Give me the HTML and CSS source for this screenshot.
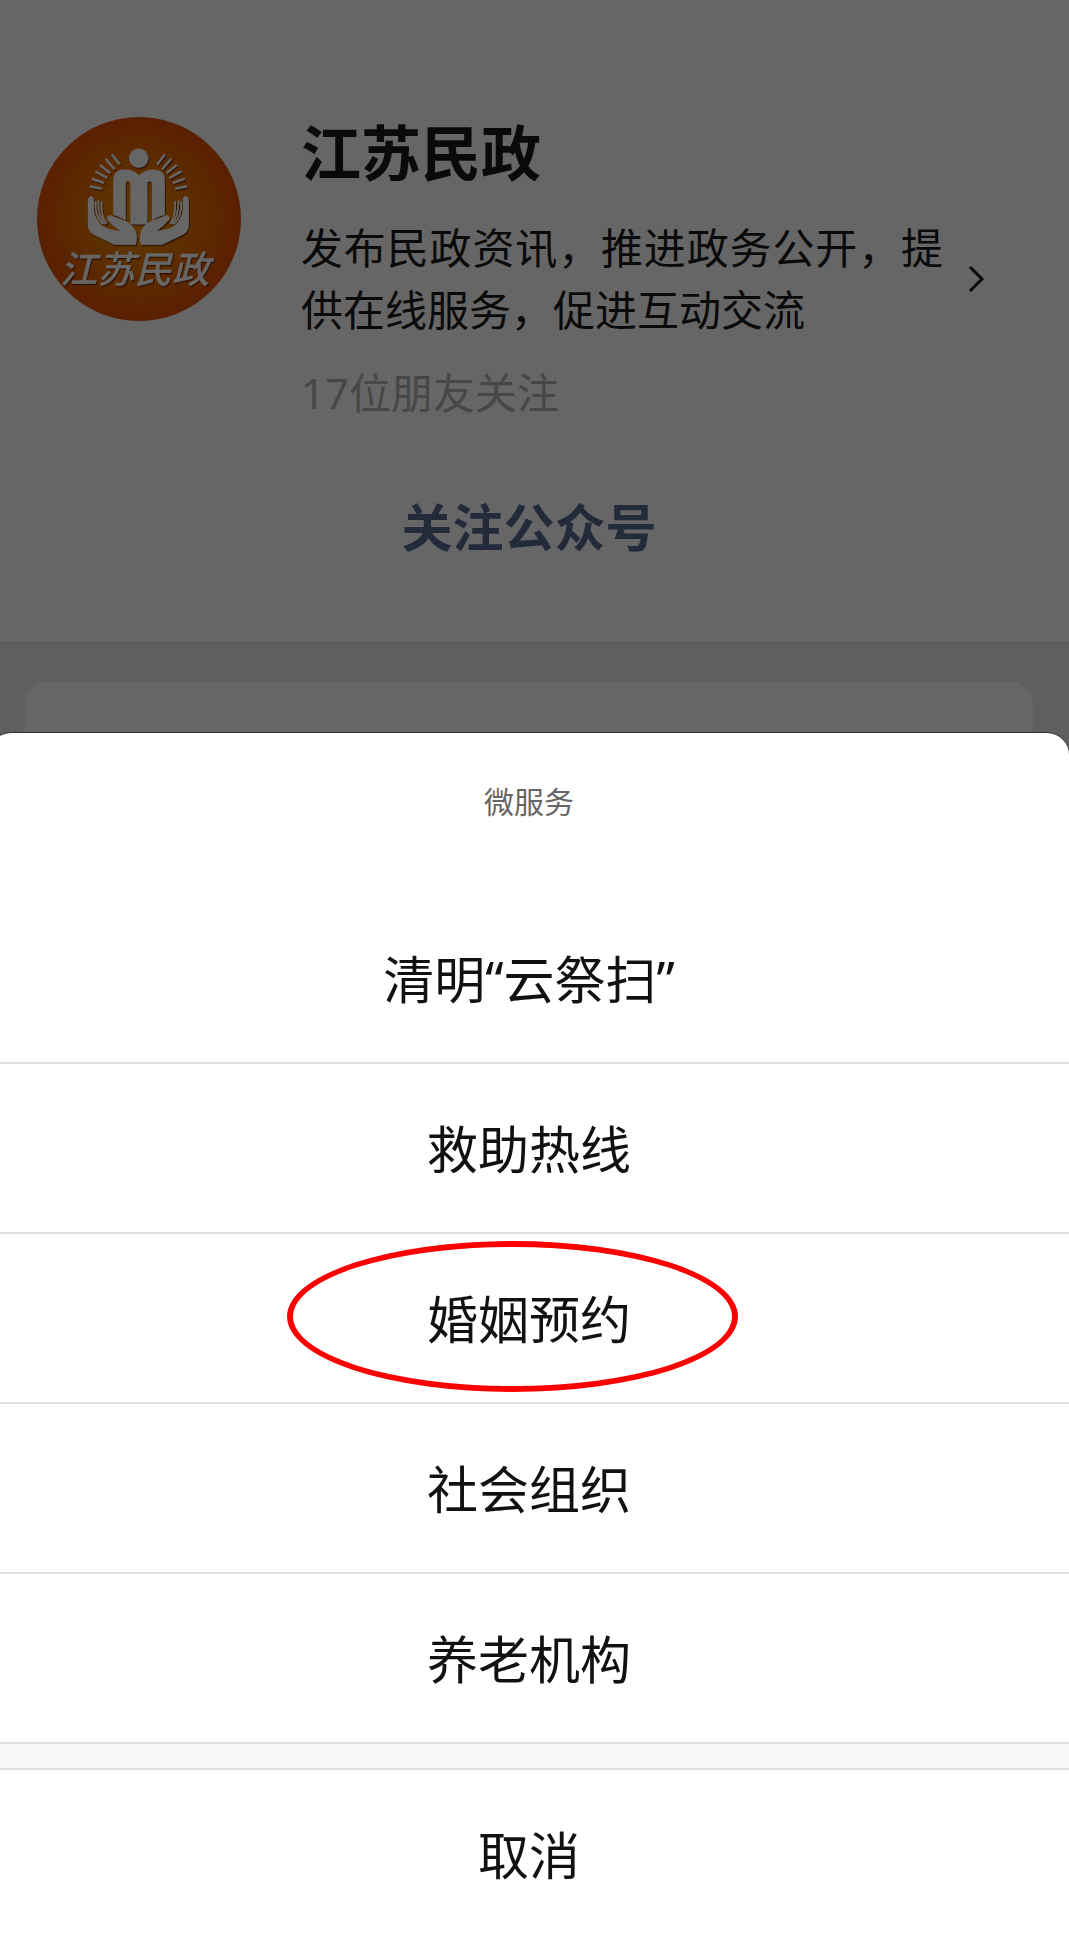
FILE: index.html
```
<!DOCTYPE html>
<html lang="zh-CN">
<head>
<meta charset="UTF-8">
<meta name="viewport" content="width=device-width, initial-scale=1.0">
<title>江苏民政</title>
<link rel="stylesheet" href="styles.css">
</head>
<body>
    <div class="screen">
        <main class="page">
            <section class="profile">
                <a class="account" href="#">
                    <svg class="logo" viewBox="52 52 610 610" role="img" aria-label="江苏民政">
                        <defs>
                            <radialGradient id="orange">
                                <stop offset="0" stop-color="#ee9400"/>
                                <stop offset="0.5" stop-color="#e87200"/>
                                <stop offset="1" stop-color="#e25005"/>
                            </radialGradient>
                            <filter id="shadow">
                                <feDropShadow dx="3" dy="4" stdDeviation="2" flood-color="#5a1c00" flood-opacity="0.8"/>
                            </filter>
                        </defs>
                        <circle cx="357" cy="357" r="305" fill="url(#orange)"/>
                        <g fill="#fff" filter="url(#shadow)">
                            <circle cx="356" cy="175" r="29"/>
                            <path d="M280 360V242Q280 209 314 209Q340 209 357 226Q374 209 400 209Q434 209 434 242V345Q414 348 396 362V252Q396 244 389 244Q382 244 382 252V373H331V252Q331 244 324 244Q317 244 317 252V362Q298 348 280 345Z"/>
                            <!-- hands -->
                            <g id="hand">
                                <path d="M204 302Q205 289 215 289Q222 290 222 302V330Q225 355 244 375Q264 390 301 393Q280 380 263 359Q258 348 270 345L324 367Q348 383 351 410Q351 425 347 434H284L222 404Q204 395 204 373Z"/>
                                <path d="M227 306Q225 350 248 371M235 303Q235 350 254 370M245 305Q243 349 259 369" fill="none" stroke="#fff" stroke-width="5" stroke-linecap="round"/>
                                <path d="M276 164L299 194M257 177L284 208M240 195L271 220M226 214L262 234M216 236L252 249M209 259L245 266" stroke="#fff" stroke-width="7"/>
                            </g>
                            <use href="#hand" transform="matrix(-1 0 0 1 710 0)"/>
                            <text class="logo-text" x="120" y="549">江苏民政</text>
                        </g>
                    </svg>
                    <div class="info">
                        <h1>江苏民政</h1>
                        <p class="intro">发布民政资讯，推进政务公开，提供在线服务，促进互动交流</p>
                        <p class="friends">17位朋友关注</p>
                    </div>
                    <svg class="arrow" viewBox="0 0 18 28" aria-hidden="true">
                        <path d="M3 2L15 14L3 26" fill="none" stroke="#191919" stroke-width="3"/>
                    </svg>
                </a>
                <button class="follow" type="button">关注公众号</button>
            </section>
            <section class="messages">
                <div class="card"></div>
            </section>
        </main>

        <!-- Bottom menu -->
        <section class="sheet" aria-labelledby="sheet-title">
            <h2 id="sheet-title">微服务</h2>
            <button class="item" type="button">清明“云祭扫”</button>
            <button class="item" type="button">救助热线</button>
            <button class="item marked" type="button">婚姻预约</button>
            <button class="item" type="button">社会组织</button>
            <button class="item" type="button">养老机构</button>
            <div class="gap"></div>
            <button class="item cancel" type="button">取消</button>
        </section>
    </div>
</body>
</html>
```
FILE: styles.css
```
*, *::after {
    box-sizing: border-box;
}

body {
    margin: 0;
    overflow-x: hidden;
    background-color: #fff;
    color: #191919;
    font-family: "Noto Sans", "Noto Sans CJK SC", sans-serif;
}

h1, h2, p {
    margin: 0;
}

button {
    border: none;
    background: none;
    color: inherit;
    font-family: inherit;
    cursor: pointer;
}

/* The screen runs a little past the left edge of the window */
.screen {
    margin-left: -11px;
}

/* Account page behind the menu */
.page {
    position: relative;
    background-color: #ededed;
}

.page::after {
    content: "";
    position: absolute;
    inset: 0;
    background-color: rgba(0, 0, 0, 0.6);
}

.profile {
    padding: 117px 48px 79px;
    background-color: #fff;
    border-bottom: 1px solid #dedede;
}

.account {
    display: flex;
    padding-right: 36px;
    color: inherit;
    text-decoration: none;
}

.logo {
    flex: none;
    width: 204px;
    height: 204px;
    margin-right: 60px;
}

.logo-text {
    font-size: 112px;
    font-style: italic;
    font-weight: 500;
}

.info {
    flex: 1;
}

h1 {
    font-size: 60px;
    line-height: 72px;
    font-weight: bold;
}

.intro {
    margin-top: 28px;
    font-size: 42px;
    line-height: 62px;
    text-align: justify;
}

.friends {
    margin-top: 21px;
    color: #b2b2b2;
    font-size: 42px;
    line-height: 62px;
}

.arrow {
    flex: none;
    align-self: center;
    width: 18px;
    height: 28px;
    margin-top: 16px;
    margin-left: 24px;
}

.follow {
    display: block;
    margin: 67px auto 0;
    padding: 0;
    color: #576b95;
    font-size: 51px;
    line-height: 72px;
    font-weight: bold;
}

.messages {
    padding: 38px 36px 0;
}

.card {
    height: 80px;
    border-radius: 24px 24px 0 0;
    background-color: #fff;
}

/* Menu */
.sheet {
    position: relative;
    margin-top: -28px;
    border-radius: 22px 22px 0 0;
    background-color: #fff;
    color: #111;
    box-shadow: 0 -1px 0 #333;
}

h2 {
    padding: 51px 0 74px;
    color: #666;
    font-size: 30px;
    line-height: 36px;
    font-weight: normal;
    text-align: center;
}

.item {
    display: block;
    position: relative;
    width: 100%;
    padding: 49px 0 47px;
    border-bottom: 2px solid #dedede;
    font-size: 51px;
    line-height: 72px;
    text-align: center;
}

.marked::after {
    content: "";
    position: absolute;
    top: 7px;
    left: calc(50% - 242px);
    width: 451px;
    height: 151px;
    border: 6px solid #fe0000;
    border-radius: 50%;
}

.gap {
    height: 24px;
    background-color: #f7f7f7;
}

.cancel {
    padding-bottom: 40px;
    border-top: 2px solid #dedede;
    border-bottom: none;
}
```
